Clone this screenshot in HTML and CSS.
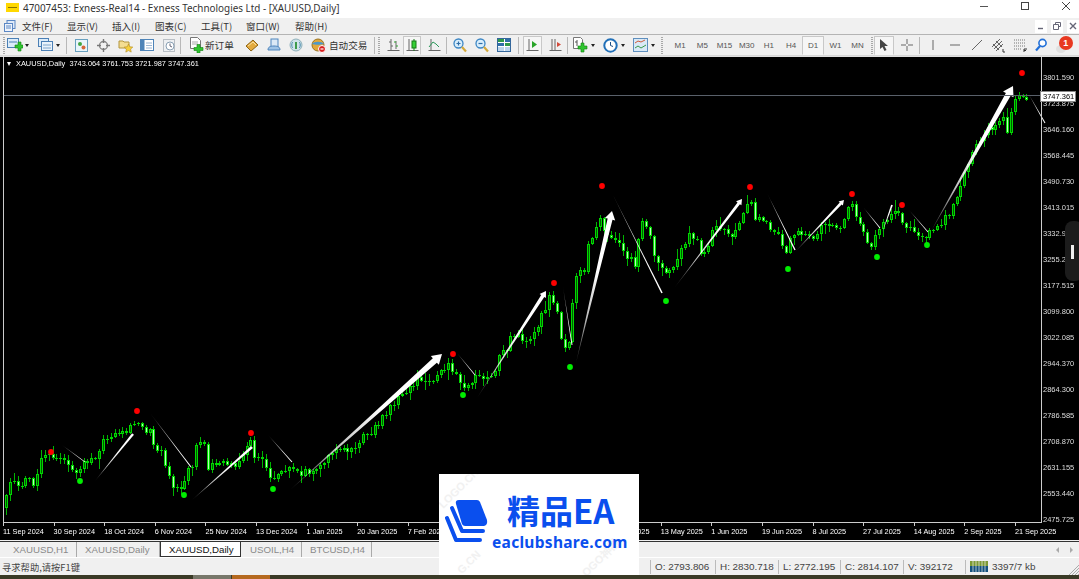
FILE: index.html
```html
<!DOCTYPE html>
<html lang="zh">
<head>
<meta charset="utf-8">
<title>47007453: Exness-Real14 - Exness Technologies Ltd - [XAUUSD,Daily]</title>
<link rel="stylesheet" href="styles.css">
</head>
<body>
<div class="app">
  <header class="titlebar">
    <svg class="app-icon" width="13" height="9" viewBox="0 0 13 9"><rect width="13" height="9" fill="#ffd800"/><rect x="2" y="4" width="9" height="1" fill="#8a7400"/></svg>
    <span class="title-text">47007453: Exness-Real14 - Exness Technologies Ltd - [XAUUSD,Daily]</span>
    <div class="win-controls">
      <svg width="10" height="10" viewBox="0 0 10 10"><path d="M1 5.5h8" stroke="#555" fill="none"/></svg>
      <svg width="10" height="10" viewBox="0 0 10 10"><rect x="1.5" y="1.5" width="7" height="7" stroke="#444" fill="none"/></svg>
      <svg width="10" height="10" viewBox="0 0 10 10"><path d="M1 1l8 8M9 1l-8 8" stroke="#444" fill="none"/></svg>
    </div>
  </header>

  <nav class="menubar">
    <svg class="doc-icon" width="12" height="12" viewBox="0 0 12 12"><rect x="3" y=".5" width="8" height="8" fill="#dfe9f7" stroke="#5b87c4"/><rect x=".5" y="3.5" width="8" height="8" fill="#eef3fb" stroke="#5b87c4"/><path d="M2 6h5M2 8h5" stroke="#5b87c4"/></svg>
    <span class="menu m1">文件(F)</span><span class="menu m2">显示(V)</span><span class="menu m3">插入(I)</span><span class="menu m4">图表(C)</span><span class="menu m5">工具(T)</span><span class="menu m6">窗口(W)</span><span class="menu">帮助(H)</span>
    <div class="mdi">
      <span class="mdi-btn"><svg width="8" height="8" viewBox="0 0 8 8"><path d="M1 6.5h5" stroke="#667" stroke-width="1.4"/></svg></span>
      <span class="mdi-btn"><svg width="8" height="8" viewBox="0 0 8 8"><path d="M2.5 2.5v-2h5v4h-2M.5 2.5h5v5h-5z" stroke="#667" fill="none"/></svg></span>
      <span class="mdi-btn"><svg width="8" height="8" viewBox="0 0 8 8"><path d="M1 1l6 6M7 1l-6 6" stroke="#667" stroke-width="1.4"/></svg></span>
    </div>
  </nav>

  <div class="toolbar">
    <i class="grip"></i>
    <span class="ic w19"><svg width="16" height="14" viewBox="0 0 16 14"><rect x=".5" y=".5" width="11" height="9" fill="#dcecf9" stroke="#4b7fb5"/><path d="M2 4h8" stroke="#4b7fb5"/><path d="M11 4v3H8v3h3v3h3v-3h2V7h-2V4z" fill="#2fc42f" stroke="#128012" stroke-width=".6"/></svg></span><b class="drop"></b>
    <span class="ic w19 ml7"><svg width="16" height="14" viewBox="0 0 16 14"><rect x=".5" y=".5" width="10" height="8" fill="#dcecf9" stroke="#4b7fb5"/><rect x="3.5" y="3.5" width="11" height="9" fill="#eaf3fb" stroke="#4b7fb5"/><path d="M5 7h8M5 10h8" stroke="#7ea6cc"/></svg></span><b class="drop"></b>
    <i class="sep ml6"></i>
    <span class="ic w22 ml3"><svg width="15" height="15" viewBox="0 0 15 15"><rect x="1.5" y="1.5" width="12" height="12" fill="#e9f5fb" stroke="#68a0bf"/><circle cx="6" cy="6" r="2" fill="#42a642"/><circle cx="9.5" cy="9.5" r="2" fill="#d6673a"/></svg></span>
    <span class="ic w22"><svg width="15" height="15" viewBox="0 0 15 15"><circle cx="7.5" cy="7.5" r="4" fill="none" stroke="#888" stroke-width="1.4"/><path d="M7.5 1v4M7.5 10v4M1 7.5h4M10 7.5h4" stroke="#777" stroke-width="1.4"/></svg></span>
    <span class="ic w22"><svg width="15" height="15" viewBox="0 0 15 15"><path d="M1 3h4l1 1h5v6H1z" fill="#f4dd92" stroke="#b3963f"/><path d="M10.5 6l1.3 2.8 3 .3-2.2 2 .6 3-2.7-1.5-2.7 1.5.6-3-2.2-2 3-.3z" fill="#f6cf3c" stroke="#b18a1c" stroke-width=".6"/></svg></span>
    <span class="ic w22"><svg width="14" height="14" viewBox="0 0 14 14"><rect x=".5" y="1.5" width="13" height="11" fill="#fff" stroke="#4e84b8"/><rect x="1" y="2" width="3.5" height="10" fill="#4e84b8"/><path d="M6 5h6M6 7.5h6M6 10h6" stroke="#9cb6d2"/></svg></span>
    <span class="ic w22"><svg width="15" height="15" viewBox="0 0 15 15"><rect x="1.5" y="1.5" width="11" height="12" fill="#eef0f2" stroke="#b8bec4"/><circle cx="8" cy="8" r="4" fill="#fff" stroke="#8aa0b4"/><path d="M8 5.5V8l2 1" stroke="#667" fill="none"/></svg></span>
    <i class="sep"></i>
    <span class="ic w19 ml5"><svg width="16" height="16" viewBox="0 0 16 16"><path d="M2.5.5h7l3 3v8h-10z" fill="#fff" stroke="#777"/><path d="M4 5h6M4 7h6" stroke="#aaa"/><path d="M9 7.500v3H6v3h3v2.500h3v-2.500h3v-3h-3v-3z" fill="#2fc42f" stroke="#128012" stroke-width=".6"/></svg></span>
    <span class="tb-text w30">新订单</span>
    <span class="ic w22 ml6"><svg width="14" height="14" viewBox="0 0 14 14"><path d="M1 8l7-6 5 5-7 6z" fill="#e3aa3e" stroke="#8f6414"/><path d="M3 8l5-4 3 3" stroke="#fbe1a4" fill="none"/></svg></span>
    <span class="ic w22"><svg width="14" height="14" viewBox="0 0 14 14"><rect x="4" y="1" width="7" height="8" fill="#dbe9f6" stroke="#4f85bd"/><path d="M1 12c0-3 2-4 6-4s6 1 6 4z" fill="#9ec3e6" stroke="#4f85bd"/></svg></span>
    <span class="ic w22"><svg width="14" height="14" viewBox="0 0 14 14"><circle cx="7" cy="7" r="6" fill="#cfe3e8" stroke="#8fb0ba"/><path d="M7 4v7" stroke="#3e9a4a" stroke-width="2"/><path d="M3.500 4c-1 2-1 4 0 6M10.500 4c1 2 1 4 0 6" stroke="#4e8bb0" fill="none"/></svg></span>
    <span class="ic w22"><svg width="15" height="15" viewBox="0 0 15 15"><circle cx="7" cy="7" r="6" fill="#e3a93b" stroke="#9a7320"/><path d="M1 6c2-3 10-3 12 0-3 1-9 1-12 0z" fill="#4e98c9"/><circle cx="11" cy="11" r="3.500" fill="#d92020" stroke="#fff"/><rect x="9.500" y="10.400" width="3" height="1.200" fill="#fff"/></svg></span>
    <span class="tb-text w41">自动交易</span>
    <i class="sep ml6"></i><i class="grip ml3"></i>
    <span class="ic w18 ml4"><svg width="13" height="14" viewBox="0 0 13 14"><path d="M.5 12.500h12M4 1v12M9 3v8" stroke="#666" fill="none"/><path d="M2 4h2M4 8h2" stroke="#666"/><path d="M7 4h2M9 8h2" stroke="#2aa52a"/></svg></span>
    <span class="ic w18 active ml1"><svg width="13" height="14" viewBox="0 0 13 14"><path d="M.5 12.500h12M3 1v12" stroke="#666" fill="none"/><path d="M8 1v12" stroke="#177a17"/><rect x="6" y="3" width="4" height="7" fill="#35d035" stroke="#177a17"/></svg></span>
    <span class="ic w18 ml4"><svg width="13" height="14" viewBox="0 0 13 14"><path d="M.5 12.500h12M3 1v12" stroke="#666" fill="none"/><path d="M1 9l4-5 3 2 3 3" stroke="#2a9a5a" fill="none"/></svg></span>
    <i class="sep ml3"></i>
    <span class="ic w22 ml2"><svg width="14" height="15" viewBox="0 0 14 15"><circle cx="5.500" cy="5.500" r="4.500" fill="#d9eefc" stroke="#3c86c4" stroke-width="1.300"/><path d="M3.500 5.500h4M5.500 3.500v4" stroke="#2f6ea8" stroke-width="1.200"/><path d="M9 9l4 4.500" stroke="#d4a93a" stroke-width="2.200"/></svg></span>
    <span class="ic w22"><svg width="14" height="15" viewBox="0 0 14 15"><circle cx="5.500" cy="5.500" r="4.500" fill="#d9eefc" stroke="#3c86c4" stroke-width="1.300"/><path d="M3.500 5.500h4" stroke="#2f6ea8" stroke-width="1.200"/><path d="M9 9l4 4.500" stroke="#d4a93a" stroke-width="2.200"/></svg></span>
    <span class="ic w22"><svg width="14" height="14" viewBox="0 0 14 14"><rect x=".5" y=".5" width="13" height="13" fill="#fff" stroke="#34679c"/><rect x="1" y="1" width="6" height="3" fill="#2f9a4a"/><rect x="8" y="1" width="5" height="3" fill="#2f6ea8"/><rect x="1" y="5" width="6" height="3" fill="#2f6ea8"/><rect x="8" y="5" width="5" height="3" fill="#2f9a4a"/><rect x="1" y="9" width="6" height="4" fill="#bcd5ec"/><rect x="8" y="9" width="5" height="4" fill="#bcd5ec"/></svg></span>
    <i class="sep ml3"></i>
    <span class="ic w19 active ml4"><svg width="13" height="14" viewBox="0 0 13 14"><path d="M.5 12.500h12M3 1v12" stroke="#666" fill="none"/><path d="M6 3v7l5-3.500z" fill="#2aa52a"/></svg></span>
    <span class="ic w22 ml2"><svg width="13" height="14" viewBox="0 0 13 14"><path d="M.5 12.500h12M3 1v12M6 1v12" stroke="#666" fill="none"/><path d="M12 6.500l-4-2.500v5z" fill="#d24a3a"/></svg></span>
    <i class="sep ml1"></i>
    <span class="ic w19 ml3"><svg width="17" height="16" viewBox="0 0 17 16"><path d="M1.500.5h7l2 2v9h-9z" fill="#fff" stroke="#777"/><path d="M5 3v6M3 5h2" stroke="#555"/><path d="M9 6v3H6v3h3v3h3v-3h3V9h-3V6z" fill="#2fc42f" stroke="#128012" stroke-width=".6"/></svg></span><b class="drop"></b>
    <span class="ic w19 ml6"><svg width="15" height="15" viewBox="0 0 15 15"><circle cx="7.500" cy="7.500" r="6.200" fill="#fff" stroke="#2270b8" stroke-width="2"/><path d="M7.500 4v3.500l2.500 1" stroke="#1d4f84" fill="none"/></svg></span><b class="drop"></b>
    <span class="ic w19 ml6"><svg width="15" height="14" viewBox="0 0 15 14"><rect x=".5" y=".5" width="14" height="13" fill="#d9e9f7" stroke="#5e8fbe"/><path d="M2 5l3-2 3 1 4-2" stroke="#d05a3a" fill="none"/><path d="M2 10l3-2 3 2 5-3" stroke="#3a9a4a" fill="none"/></svg></span><b class="drop"></b>
    <i class="grip ml6"></i>
    <div class="periods">
      <span class="per">M1</span><span class="per">M5</span><span class="per">M15</span><span class="per">M30</span><span class="per">H1</span><span class="per">H4</span><span class="per active">D1</span><span class="per">W1</span><span class="per">MN</span>
    </div>
    <i class="grip ml2"></i>
    <span class="ic w20 active ml1"><svg width="12" height="14" viewBox="0 0 12 14"><path d="M2 1v10l2.500-2 2 4 2-1-2-4H10z" fill="#444"/></svg></span>
    <span class="ic w22 ml2"><svg width="14" height="14" viewBox="0 0 14 14"><path d="M7 1v5M7 8v5M1 7h5M8 7h5" stroke="#666"/></svg></span>
    <i class="sep ml1"></i>
    <span class="ic w22 ml2"><svg width="14" height="14" viewBox="0 0 14 14"><path d="M7 2v10" stroke="#666"/></svg></span>
    <span class="ic w22"><svg width="14" height="14" viewBox="0 0 14 14"><path d="M2 7h10" stroke="#666"/></svg></span>
    <span class="ic w22"><svg width="14" height="14" viewBox="0 0 14 14"><path d="M2 12L12 2" stroke="#666"/></svg></span>
    <span class="ic w22"><svg width="15" height="15" viewBox="0 0 15 15"><path d="M1 9l8-8M3 11l8-8M5 13l7-7M2 6l6 6M5 3l6 6" stroke="#666"/><path d="M12 11v3h2" stroke="#333" fill="none"/></svg></span>
    <span class="ic w22"><svg width="15" height="15" viewBox="0 0 15 15"><path d="M1 2h11M1 5h11M1 8h11M1 11h8" stroke="#777" stroke-dasharray="1 1"/><path d="M11 11v3M11 11h3M11 12.500h2" stroke="#333"/></svg></span>
    <span class="ic w18"><svg width="14" height="14" viewBox="0 0 14 14"><circle cx="8.500" cy="5" r="3.600" fill="#fff" stroke="#2270d8" stroke-width="1.600"/><path d="M6 8l-4 4.500" stroke="#2270d8" stroke-width="2.200"/></svg></span>
    <span class="bubble ml5"><i class="bubble-tail"></i><b class="badge">1</b></span>
  </div>

  <main class="chart">
    <canvas id="candles" class="chart-canvas" width="1079" height="485"></canvas>
    <div class="chart-left">
      <div class="plot">
        <div class="legend"><i class="tri"></i>XAUUSD,Daily&nbsp; 3743.064 3761.753 3721.987 3747.361</div>
        <i class="bidline"></i>
      </div>
      <div class="dates">
        <span>11 Sep 2024</span><span>30 Sep 2024</span><span>18 Oct 2024</span><span>6 Nov 2024</span><span>25 Nov 2024</span><span>13 Dec 2024</span><span>1 Jan 2025</span><span>20 Jan 2025</span><span>7 Feb 2025</span><span>26 Feb 2025</span><span>17 Mar 2025</span><span>4 Apr 2025</span><span>24 Apr 2025</span><span>13 May 2025</span><span>1 Jun 2025</span><span>19 Jun 2025</span><span>8 Jul 2025</span><span>27 Jul 2025</span><span>14 Aug 2025</span><span>2 Sep 2025</span><span>21 Sep 2025</span>
      </div>
    </div>
    <div class="prices">
      <span>3801.590</span><span>3723.875</span><span>3646.160</span><span>3568.445</span><span>3490.730</span><span>3413.015</span><span>3332.945</span><span>3255.230</span><span>3177.515</span><span>3099.800</span><span>3022.085</span><span>2944.370</span><span>2864.300</span><span>2786.585</span><span>2708.870</span><span>2631.155</span><span>2553.440</span><span>2475.725</span>
    </div>
    <div class="bid-tag">3747.361</div>
    <div class="scroll-hint"><i></i></div>
  </main>

  <div class="tabs">
    <span class="tab w72">XAUUSD,H1</span><span class="tab w83">XAUUSD,Daily</span><span class="tab current">XAUUSD,Daily</span><span class="tab w61">USOIL,H4</span><span class="tab w70">BTCUSD,H4</span>
    <span class="tab-arrows"><i class="ar-l"></i><i class="ar-r"></i></span>
  </div>

  <footer class="status">
    <span class="st-help">寻求帮助,请按F1键</span>
    <span class="st w65">O: 2793.806</span><span class="st w63">H: 2830.718</span><span class="st w62">L: 2772.195</span><span class="st w63">C: 2814.107</span><span class="st w62">V: 392172</span>
    <span class="st st-conn"><svg width="18" height="11" viewBox="0 0 18 11"><path d="M0 0h18v5H0z" fill="#7d9a35"/><path d="M0 5h18v6H0z" fill="#15527e"/><path d="M3 0v11M6 0v11M9 0v11M12 0v11M15 0v11" stroke="#eee" stroke-width=".7"/></svg>3397/7 kb</span>
    <svg class="grip-corner" width="12" height="12" viewBox="0 0 12 12"><path d="M12 2L2 12M12 5l-7 7M12 8l-4 4M12 11l-1 1" stroke="#aaa"/></svg>
  </footer>

  <div class="taskstrip"><i class="ts-grey"></i><i class="ts-orange"></i></div>

  <aside class="promo">
    <span class="wm wm1">LOGO.CN</span><span class="wm wm2">LOGO神器</span><span class="wm wm3">G.CN</span>
    <svg class="promo-icon" width="43" height="43" viewBox="0 0 43 43">
      <path d="M2 18l9 22h24" fill="none" stroke="#0a4fee" stroke-width="4" stroke-linejoin="round" stroke-linecap="round"/>
      <path d="M7 8l10 23h21" fill="none" stroke="#0a4fee" stroke-width="4" stroke-linejoin="round" stroke-linecap="round"/>
      <path d="M14 0h18q2 0 3 2l7 18q1 5-3 6H20q-2 0-3-2L11 4q-1-4 3-4z" fill="#0a4fee"/>
    </svg>
    <div class="promo-text">
      <div class="promo-big">精品EA</div>
      <div class="promo-url">eaclubshare.com</div>
    </div>
  </aside>
</div>
<script src="chart.js"></script>
</body>
</html>
```
FILE: styles.css
```css
* { box-sizing: border-box; }
html, body { margin: 0; padding: 0; overflow: hidden; }
body { width: 1079px; height: 579px; background: #f0f0f0; font-family: "Noto Sans", "Noto Sans CJK SC", sans-serif; }
i, b { display: block; font-style: normal; }
.app { position: relative; width: 1079px; height: 579px; display: flex; flex-direction: column; }

.titlebar { height: 18px; background: #fff; display: flex; align-items: center; padding-left: 6px; flex: none; }
.app-icon { margin-right: 4px; margin-bottom: 3px; }
.title-text { font-size: 9.9px; color: #333; white-space: nowrap; margin-bottom: 2px; }
.win-controls { margin-left: auto; display: flex; gap: 31px; padding-right: 8px; margin-bottom: 6px; }

.menubar { height: 16px; background: #f0f0f0; display: flex; align-items: center; padding-left: 4px; flex: none; font-family: "Noto Sans CJK SC", sans-serif; font-size: 9.5px; color: #333; }
.doc-icon { margin-right: 6px; }
.menu { width: 45px; white-space: nowrap; }
.m1 { width: 45px; } .m3 { width: 43px; } .m4 { width: 46px; } .m6 { width: 49px; }
.mdi { margin-left: auto; display: flex; gap: 4px; }
.mdi-btn { width: 12px; height: 13px; background: #fff; display: flex; align-items: center; justify-content: center; }

.toolbar { height: 22px; flex: none; background: #f0f0f0; border-top: 1px solid #b4b4b4; border-bottom: 1px solid #d8d8d8; display: flex; align-items: center; padding-left: 3px; font-family: "Noto Sans CJK SC", sans-serif; }
.grip { width: 2px; height: 17px; background: repeating-linear-gradient(#a8a8a8 0 1px, transparent 1px 2px); flex: none; }
.sep { width: 1px; height: 17px; background: #b8b8b8; flex: none; }
.ic { height: 19px; display: flex; align-items: center; justify-content: center; flex: none; }
.w18 { width: 18px; } .w19 { width: 19px; } .w20 { width: 20px; } .w22 { width: 22px; }
.active { background: #f6f6f6; border: 1px solid #c8c8c8; border-bottom-color: transparent; }
.drop { width: 0; height: 0; border: 2.5px solid transparent; border-top: 3px solid #222; border-bottom: 0; flex: none; margin-left: 1px; }
.ml1 { margin-left: 1px; } .ml2 { margin-left: 2px; } .ml3 { margin-left: 3px; } .ml4 { margin-left: 4px; } .ml5 { margin-left: 5px; } .ml6 { margin-left: 6px; } .ml7 { margin-left: 7px; }
.tb-text { font-size: 9.6px; color: #333; white-space: nowrap; flex: none; }
.w30 { width: 30px; } .w41 { width: 39px; }
.periods { display: flex; margin-left: 6px; }
.per { width: 22.200px; height: 19px; font-family: "Liberation Sans", sans-serif; font-size: 8px; color: #555; display: flex; align-items: center; justify-content: center; }
.per.active { background: #f6f6f6; border: 1px solid #c8c8c8; border-bottom-color: transparent; }
.bubble { position: relative; width: 18px; height: 19px; flex: none; }
.bubble-tail { position: absolute; left: 1px; top: 9px; width: 10px; height: 8px; background: #e0e0e0; border-radius: 50%; }
.badge { position: absolute; left: 4px; top: 0; width: 14px; height: 14px; border-radius: 50%; background: #e83820; color: #fff; font: 700 9px/14px "Liberation Sans", sans-serif; text-align: center; }

.chart { position: relative; height: 485px; flex: none; background: #000; display: flex; border-top: 1px solid #e0e0e0; border-bottom: 1px solid #f0f0f0; }
.chart-canvas { position: absolute; left: 0; top: 0; }
.chart-left { position: relative; width: 1039px; margin-left: 3px; flex: none; display: flex; flex-direction: column; }
.plot { position: relative; height: 466px; border-left: 1px solid #ccc; border-right: 1px solid #ccc; border-bottom: 1px solid #ccc; flex: none; }
.legend { padding: 2px 0 0 12px; position: relative; font: 7.400px/10px "Liberation Sans", sans-serif; color: #fff; white-space: nowrap; }
.tri { position: absolute; left: 3px; top: 5px; width: 0; height: 0; border: 2.500px solid transparent; border-top: 4px solid #fff; border-bottom: 0; }
.bidline { position: absolute; left: 0; right: 0; top: 38px; height: 1px; background: #59606a; }
.dates { display: grid; grid-template-columns: repeat(21, 50.600px); height: 17px; font: 7.300px/15px "Liberation Sans", sans-serif; color: #fff; }
.dates span { white-space: nowrap; position: relative; padding-top: 1px; }
.dates span::before { content: ""; position: absolute; left: 0; top: -1px; width: 1px; height: 4px; background: #ccc; }
.prices { position: relative; flex: 1; padding: 8px 0 0 1px; display: flex; flex-direction: column; font: 7.500px/26px "Liberation Sans", sans-serif; color: #ddd; }
.prices span { height: 26px; flex: none; white-space: nowrap; position: relative; }
.bid-tag { position: absolute; left: 1040px; top: 34px; width: 36px; height: 11px; background: #fff; color: #000; font: 7.500px/11px "Liberation Sans", sans-serif; padding-left: 2px; border: 1px solid #888; line-height: 9px; }
.scroll-hint { position: absolute; left: 1065px; top: 164px; width: 18px; height: 60px; border-radius: 8px; background: #1c1c1c; }
.scroll-hint i { position: absolute; left: 6px; top: 24px; width: 3px; height: 14px; background: #eee; }

.tabs { height: 16px; flex: none; display: flex; align-items: center; background: #f0f0f0; border-top: 1px solid #333; padding-left: 2px; font: 9.700px/15px "Liberation Sans", sans-serif; color: #8a8a8a; }
.tab { height: 15px; flex: none; padding-left: 8px; white-space: nowrap; border-right: 1px solid #aaa; }
.w72 { width: 75px; padding-left: 11px; } .w83 { width: 83px; }
.tab.current { width: 81px; padding-left: 8px; background: #fff; color: #111; border: 1px solid #333; border-top: 0; border-bottom-width: 2px; height: 16px; }
.w61 { width: 61px; padding-left: 9px; } .w70 { width: 70px; padding-left: 8px; }
.tab-arrows { margin-left: auto; display: flex; gap: 11px; padding-right: 6px; }
.ar-l { border: 3px solid transparent; border-right: 3px solid #aaa; border-left: 0; }
.ar-r { border: 3px solid transparent; border-left: 3px solid #aaa; border-right: 0; }

.status { height: 18px; flex: none; background: #f0f0f0; border-top: 1px solid #fff; display: flex; align-items: center; font: 9.900px/16px "Liberation Sans", sans-serif; color: #444; position: relative; }
.st-help { width: 650px; padding-left: 2px; font-family: "Noto Sans CJK SC", sans-serif; font-size: 9.300px; }
.st { height: 14px; line-height: 14px; padding-left: 4px; border-left: 1px solid #bbb; white-space: nowrap; flex: none; }
.w65 { width: 65px; } .w62 { width: 62px; } .w63 { width: 63px; }
.st-conn { display: flex; align-items: center; gap: 4px; }
.grip-corner { position: absolute; right: 0; bottom: 0; }

.taskstrip { height: 4px; flex: none; background: #3a3a26; position: relative; }
.ts-grey { position: absolute; left: 193px; top: 0; width: 38px; height: 4px; background: #77776a; }
.ts-orange { position: absolute; left: 232px; top: 0; width: 38px; height: 4px; background: #b5691f; }

.promo { position: absolute; left: 439px; top: 474px; width: 200px; height: 101px; background: #fff; overflow: hidden; color: #0a4fee; }
.promo-icon { position: absolute; left: 6px; top: 26px; }
.promo-text { position: absolute; left: 53px; top: 15px; width: 146px; }
.promo-big { margin-left: 15px; font: 700 33px/42px "Noto Sans CJK SC", sans-serif; white-space: nowrap; }
.promo-url { font: 700 15.500px/18px "Noto Sans", sans-serif; letter-spacing: .3px; white-space: nowrap; margin-top: 2px; }
.wm { position: absolute; color: #f1f1f1; font: 700 11px/12px "Liberation Sans", sans-serif; transform: rotate(-45deg); white-space: nowrap; }
.wm1 { left: -6px; top: 8px; } .wm2 { left: 132px; top: 80px; } .wm3 { left: 16px; top: 82px; }
```
FILE: chart.js
```js
(function () {
  var c = document.getElementById('candles').getContext('2d');
  var top = 57; // canvas origin in page pixels
  var path = [[4,508],[8,505],[10,490],[14,483],[20,487],[26,480],[30,478],[36,482],[40,470],[45,458],[50,455],[58,460],[65,462],[72,462],[78,472],[83,472],[87,462],[95,460],[102,452],[106,440],[112,435],[120,433],[128,435],[134,425],[139,418],[143,428],[150,432],[155,432],[157,455],[162,445],[168,465],[172,475],[177,487],[183,490],[187,478],[192,470],[197,460],[200,442],[206,440],[210,470],[215,465],[220,462],[230,462],[240,465],[245,460],[250,445],[254,438],[258,462],[264,460],[270,470],[275,480],[282,472],[292,470],[302,472],[310,472],[316,468],[322,468],[335,452],[345,450],[355,450],[365,438],[378,427],[388,412],[398,403],[405,395],[417,383],[427,377],[432,383],[438,373],[443,367],[453,365],[457,373],[463,383],[467,392],[473,383],[477,375],[492,378],[497,373],[502,352],[510,348],[515,333],[522,335],[530,340],[538,332],[542,320],[548,310],[554,293],[561,317],[564,340],[568,350],[573,337],[576,297],[580,273],[588,267],[592,237],[598,232],[602,213],[605,230],[612,237],[620,240],[628,253],[637,265],[640,250],[643,220],[648,227],[653,238],[658,257],[665,273],[672,272],[678,268],[682,250],[687,242],[691,233],[700,237],[705,257],[712,243],[716,227],[722,225],[728,233],[737,237],[743,223],[747,207],[753,203],[757,217],[763,218],[768,218],[773,227],[780,235],[785,247],[790,250],[793,237],[798,230],[805,233],[813,240],[818,238],[825,225],[832,227],[840,230],[848,220],[852,207],[856,207],[858,220],[862,227],[867,233],[873,245],[879,237],[882,230],[888,220],[896,215],[902,213],[906,225],[913,227],[920,233],[928,237],[937,227],[943,223],[952,213],[957,200],[963,187],[965,173],[972,160],[980,143],[988,133],[998,125],[1005,117],[1010,130],[1013,117],[1019,97],[1025,92],[1028,97]];
  var seed = 12345;
  function rnd() { seed = (seed * 1664525 + 1013904223) % 4294967296; return seed / 4294967296; }
  function at(x) {
    for (var i = 1; i < path.length; i++) {
      if (x <= path[i][0]) {
        var a = path[i - 1], b = path[i];
        return a[1] + (b[1] - a[1]) * (x - a[0]) / (b[0] - a[0]);
      }
    }
    return path[path.length - 1][1];
  }
  function Y(y) { return y - top; }
  var step = 3.88, prev = at(4);
  for (var x = 5; x < 1028; x += step) {
    var px = Math.round(x);
    var close = at(x + step) + (rnd() - 0.5) * 8;
    var open = prev;
    var hi = Math.round(Math.min(open, close)), lo = Math.round(Math.max(open, close));
    if (lo - hi < 1) lo = hi + 1;
    var wickT = Math.round(hi - 1 - rnd() * rnd() * 10), wickB = Math.round(lo + 1 + rnd() * rnd() * 10);
    c.fillStyle = '#00b400';
    c.fillRect(px + 1, Y(wickT), 1, wickB - wickT);
    c.fillStyle = '#00d800';
    c.fillRect(px, Y(hi), 3, lo - hi);
    if (lo - hi > 2) {
      c.fillStyle = close < open ? '#005c00' : '#b8ffb8';
      c.fillRect(px + 1, Y(hi) + 1, 1, lo - hi - 2);
    }
    prev = close;
  }

  // Fading trend strokes: each tapers from nothing at the tail to full width at the head.
  function stroke(x1, y1, x2, y2, w, head) {
    var dx = x2 - x1, dy = y2 - y1, len = Math.sqrt(dx * dx + dy * dy);
    var ux = dx / len, uy = dy / len, nx = -uy, ny = ux;
    var g = c.createLinearGradient(x1, Y(y1), x2, Y(y2));
    g.addColorStop(0, 'rgba(255,255,255,0.1)');
    g.addColorStop(0.3, 'rgba(255,255,255,0.75)');
    g.addColorStop(0.6, '#fff');
    g.addColorStop(1, '#fff');
    c.fillStyle = g;
    var bx = x2 - ux * head * 1.2, by = y2 - uy * head * 1.2;
    c.beginPath();
    c.moveTo(x1, Y(y1));
    c.lineTo(bx + nx * w / 2, Y(by + ny * w / 2));
    if (head) {
      c.lineTo(bx + nx * head * 0.75, Y(by + ny * head * 0.75));
      c.lineTo(x2, Y(y2));
      c.lineTo(bx - nx * head * 0.75, Y(by - ny * head * 0.75));
    } else {
      c.lineTo(x2, Y(y2));
    }
    c.lineTo(bx - nx * w / 2, Y(by - ny * w / 2));
    c.closePath();
    c.fill();
  }
  var ups = [
    [95,481,133,434,2.4,0],[192,500,252,447,2.8,0],[290,490,442,354,6,8],[477,398,546,291,3.6,5],
    [576,363,612,211,5,7],[675,287,742,199,3,4.5],[795,252,844,200,2.6,4],[882,233,892,205,1.8,0],[930,233,1013,86,5.5,8]
  ];
  var downs = [
    [62,445,85,462,.8],[150,413,191,467,1.2],[268,435,292,462,1.1],[457,353,475,375,.9],[563,287,572,345,1],
    [612,193,662,293,1.6],[767,193,795,250,1.4],[863,207,880,228,1],[909,210,928,232,.9],[1028,93,1045,123,1.1]
  ];
  ups.forEach(function (a) { stroke(a[0], a[1], a[2], a[3], a[4], a[5]); });
  downs.forEach(function (a) { stroke(a[0], a[1], a[2], a[3], a[4], 0); });

  function dots(list, color) {
    c.fillStyle = color;
    list.forEach(function (p) { c.beginPath(); c.arc(p[0], Y(p[1]), 2.9, 0, Math.PI * 2); c.fill(); });
  }
  dots([[51,452],[137,411],[251,433],[453,354],[554,283],[602,186],[750,187],[852,194],[902,205],[1022,73]], '#ff0000');
  dots([[80,481],[184,495],[273,489],[463,395],[570,367],[666,301],[788,269],[877,257],[927,245]], '#00ee00');
})();
```
